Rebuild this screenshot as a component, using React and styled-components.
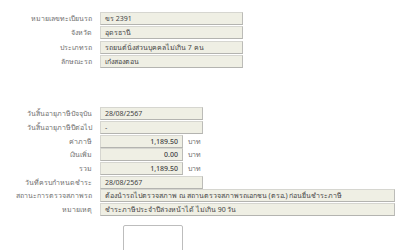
import styled, { createGlobalStyle } from "styled-components";

const GlobalStyle = createGlobalStyle`
  html, body {
    margin: 0;
    padding: 0;
    background: #ffffff;
  }
  body {
    font-family: Tahoma, "Noto Sans", "DejaVu Sans", sans-serif;
    font-size: 7px;
  }
`;

const Page = styled.div`
  width: 400px;
  height: 250px;
  overflow: hidden;
  padding-top: 12px;
  box-sizing: border-box;
`;

const Group = styled.div`
  display: flex;
  flex-direction: column;
  gap: ${(p) => p.$gap}px;
  margin-bottom: ${(p) => p.$after || 0}px;
`;

const Row = styled.div`
  display: flex;
  align-items: center;
  height: 13px;
`;

const Label = styled.div`
  width: 100px;
  box-sizing: border-box;
  padding-right: 8px;
  text-align: right;
  color: #707070;
  white-space: nowrap;
  line-height: 13px;
`;

const Field = styled.div`
  width: ${(p) => p.$w}px;
  height: 13px;
  box-sizing: border-box;
  padding: 0 4px;
  background: #efefe4;
  border: 1px solid #d6d6d0;
  border-bottom-color: #b4b4b0;
  border-right-color: #bcbcb8;
  color: #444444;
  line-height: 11px;
  white-space: nowrap;
  overflow: hidden;
  text-align: ${(p) => (p.$num ? "right" : "left")};
  font-weight: ${(p) => (p.$num ? 500 : 400)};
`;

const Unit = styled.span`
  margin-left: 5px;
  color: #707070;
`;

const ButtonRow = styled.div`
  padding-left: 123px;
  margin-top: 9px;
`;

const Button = styled.div`
  width: 60px;
  height: 30px;
  box-sizing: border-box;
  border: 1px solid #bdbdbd;
  border-radius: 2px;
  background: #ffffff;
`;

const car = [
  ["หมายเลขทะเบียนรถ", "ขร 2391"],
  ["จังหวัด", "อุดรธานี"],
  ["ประเภทรถ", "รถยนต์นั่งส่วนบุคคลไม่เกิน 7 คน"],
  ["ลักษณะรถ", "เก๋งสองตอน"],
];

const tax = [
  { label: "วันสิ้นอายุภาษีปัจจุบัน", value: "28/08/2567", w: 103 },
  { label: "วันสิ้นอายุภาษีปีต่อไป", value: "-", w: 103 },
  { label: "ค่าภาษี", value: "1,189.50", w: 83, num: true },
  { label: "เงินเพิ่ม", value: "0.00", w: 83, num: true },
  { label: "รวม", value: "1,189.50", w: 83, num: true },
  { label: "วันที่ครบกำหนดชำระ", value: "28/08/2567", w: 103 },
  {
    label: "สถานะการตรวจสภาพรถ",
    value: "ต้องนำรถไปตรวจสภาพ ณ สถานตรวจสภาพรถเอกชน (ตรอ.) ก่อนยื่นชำระภาษี",
    w: 295,
  },
  { label: "หมายเหตุ", value: "ชำระภาษีประจำปีล่วงหน้าได้ ไม่เกิน 90 วัน", w: 295 },
];

export default function App() {
  return (
    <>
      <GlobalStyle />
      <Page>
        <Group $gap={1.4} $after={39}>
          {car.map(([label, value]) => (
            <Row key={label}>
              <Label>{label}</Label>
              <Field $w={143}>{value}</Field>
            </Row>
          ))}
        </Group>
        <Group $gap={0.7}>
          {tax.map((t) => (
            <Row key={t.label}>
              <Label>{t.label}</Label>
              <Field $w={t.w} $num={t.num}>
                {t.value}
              </Field>
              {t.num && <Unit>บาท</Unit>}
            </Row>
          ))}
        </Group>
        <ButtonRow>
          <Button />
        </ButtonRow>
      </Page>
    </>
  );
}
